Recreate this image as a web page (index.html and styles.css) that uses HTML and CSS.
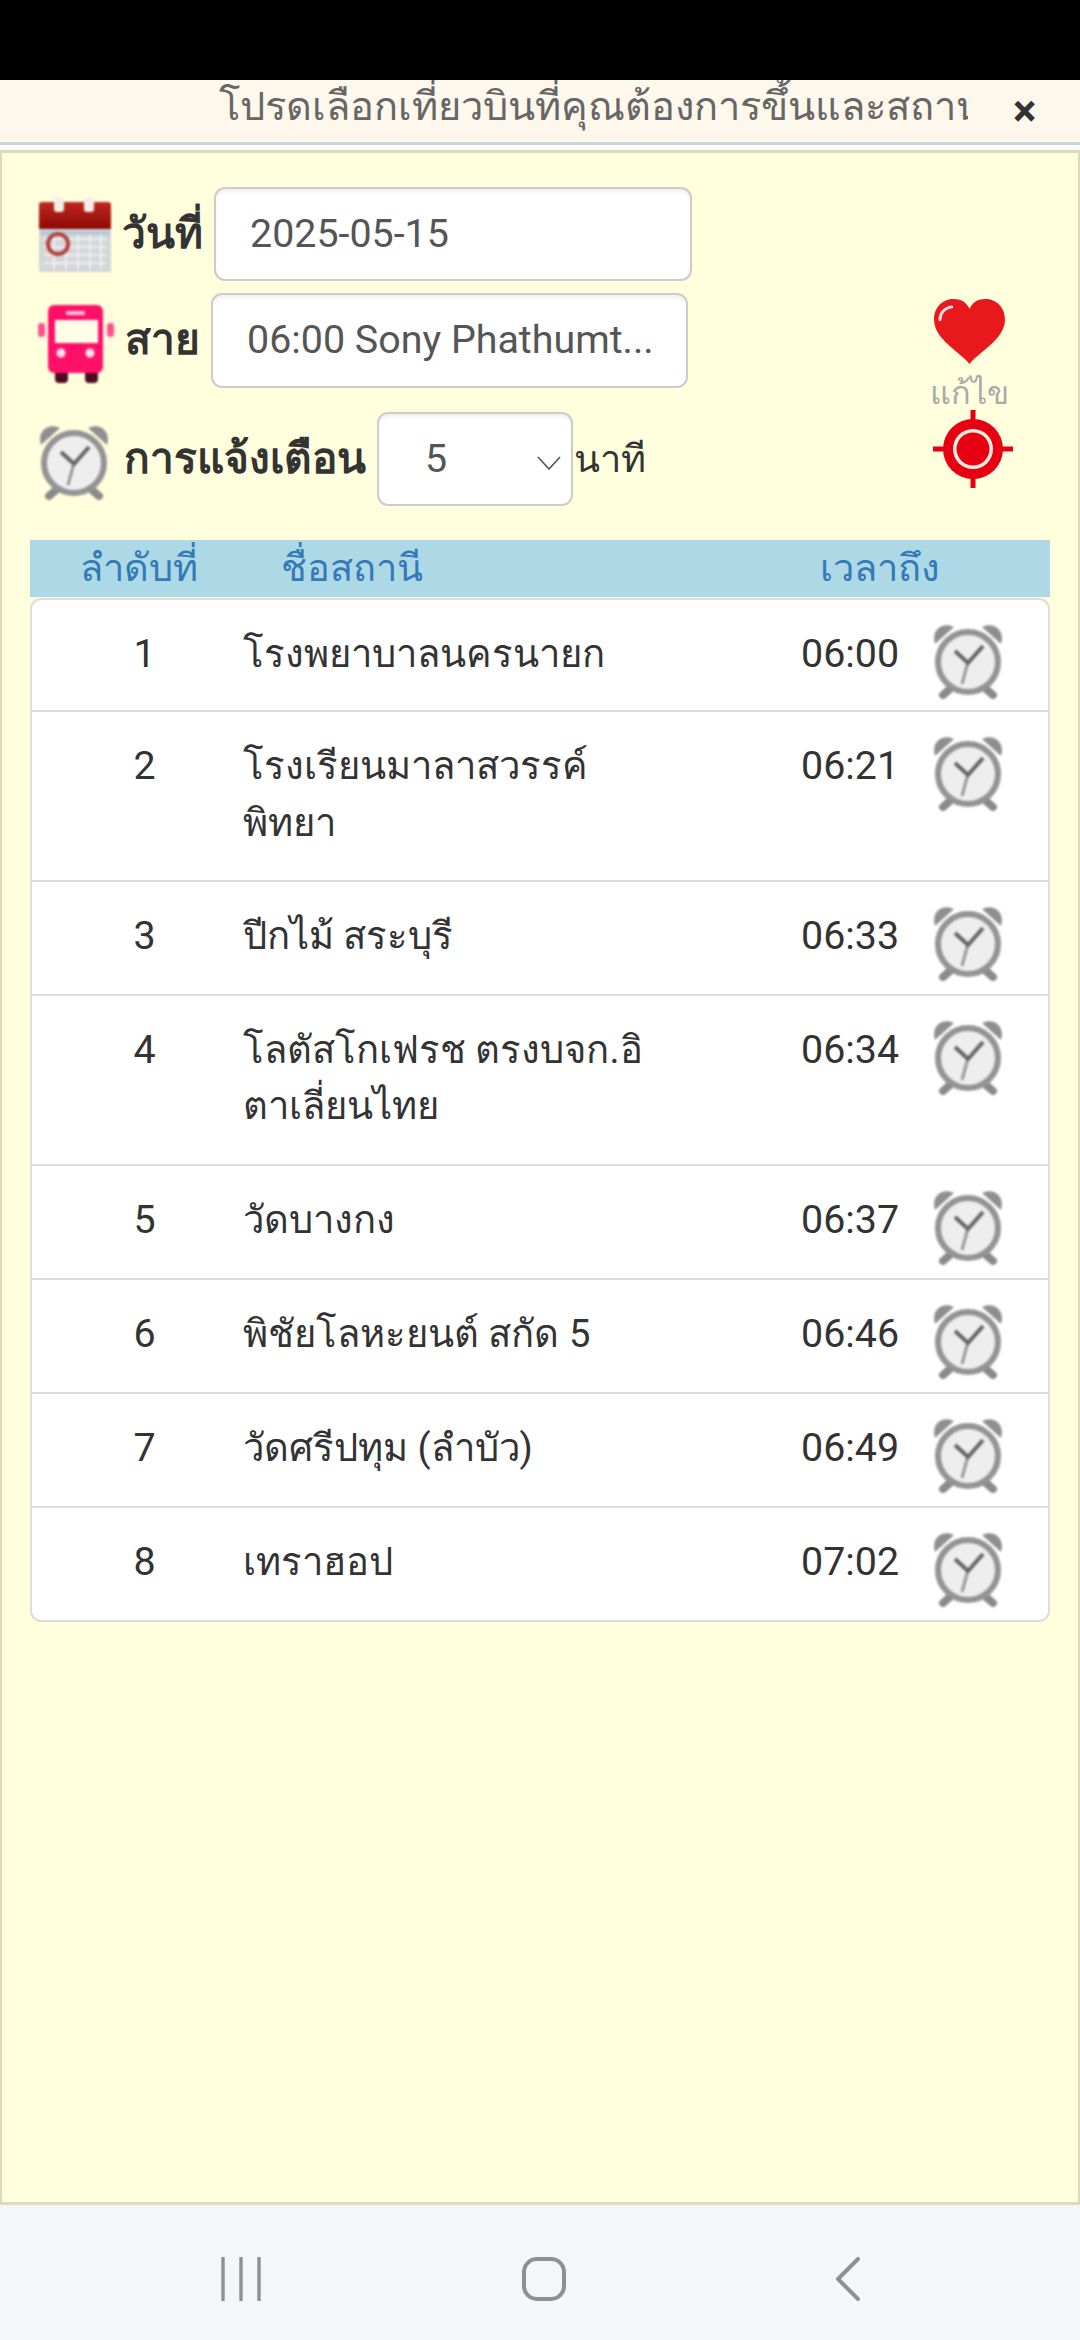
FILE: index.html
```html
<!DOCTYPE html>
<html lang="th">
<head>
<meta charset="utf-8">
<title>เลือกสถานี</title>
<link rel="stylesheet" href="styles.css">
</head>
<body>
<svg class="defs" width="0" height="0" aria-hidden="true">
  <defs>
    <linearGradient id="calred" x1="0" y1="0" x2="0" y2="1"><stop offset="0" stop-color="#c0281f"/><stop offset="1" stop-color="#8c0a06"/></linearGradient>
    <symbol id="clock" viewBox="0 0 72 76">
      <path d="M2 21C-2 8 8-2 21 4zM68 21C72 8 62-2 49 4z" fill="#8f8f8f"/>
      <path d="M17 66 10 72M53 66l7 6" stroke="#8a8a8a" stroke-width="8" stroke-linecap="round"/>
      <circle cx="35" cy="39" r="30" fill="#eeeeee" stroke="#949494" stroke-width="6"/>
      <path d="M35 39 29 61" fill="none" stroke="#999" stroke-width="3"/>
      <path d="M22 28 35 40 50 23" fill="none" stroke="#666" stroke-width="4"/>
    </symbol>
  </defs>
</svg>
<div class="blackbar"></div>
<div class="notice">
  <div class="marquee"><span>โปรดเลือกเที่ยวบินที่คุณต้องการขึ้นและสถานที่</span></div>
  <div class="close">×</div>
</div>
<main class="panel">
  <section class="top">
    <div class="form">
      <div class="frow frow-date">
        <svg class="icon cal" viewBox="0 0 74 76">
          <rect x="1" y="32" width="72" height="43" fill="#d4d6d8"/>
          <path d="M6 42h62M6 50h62M6 58h62M6 66h62M16 34v38M28 34v38M40 34v38M52 34v38M63 34v38" stroke="#eceef0" stroke-width="2"/>
          <path d="M2 36h70" stroke="#a9c6dc" stroke-width="3"/>
          <path d="M4 5h66a3 3 0 0 1 3 3v24H1V8a3 3 0 0 1 3-3z" fill="url(#calred)"/>
          <rect x="16" y="0" width="10" height="15" rx="3" fill="#f4f0e8"/>
          <rect x="46" y="0" width="10" height="15" rx="3" fill="#f4f0e8"/>
          <circle cx="20" cy="47" r="10" fill="none" stroke="#b5403c" stroke-width="4"/>
        </svg>
        <span class="flabel">วันที่</span>
        <div class="field field-date">2025-05-15</div>
      </div>
      <div class="frow frow-line">
        <svg class="icon bus" viewBox="0 0 77 78">
          <path d="M17 62h13v12a4 4 0 0 1-4 4h-5a4 4 0 0 1-4-4zM47 62h13v12a4 4 0 0 1-4 4h-5a4 4 0 0 1-4-4z" fill="#4e0a22"/>
          <rect x="10" y="0" width="55" height="68" rx="6" fill="#ff0f68"/>
          <rect x="17" y="15" width="43" height="23" fill="#ffffe8"/>
          <rect x="28" y="6" width="19" height="4" rx="1.5" fill="#ffc0d4"/>
          <circle cx="23" cy="48" r="4.5" fill="#ffe0ea"/>
          <circle cx="52" cy="48" r="4.5" fill="#ffe0ea"/>
          <rect x="0" y="18" width="7" height="14" rx="3" fill="#ff4f90"/>
          <rect x="69" y="18" width="7" height="14" rx="3" fill="#ff4f90"/>
        </svg>
        <span class="flabel">สาย</span>
        <div class="field field-line">06:00 Sony Phathumt...</div>
      </div>
      <div class="frow frow-alert">
        <svg class="icon alarm"><use href="#clock"/></svg>
        <span class="flabel">การแจ้งเตือน</span>
        <div class="field field-select">
          <span>5</span>
          <svg class="chev" viewBox="0 0 24 14"><path d="M1 1l11 12L23 1" fill="none" stroke="#555" stroke-width="1.6"/></svg>
        </div>
        <span class="unit">นาที</span>
      </div>
    </div>
    <div class="actions">
      <svg class="heart" viewBox="0 0 74 68">
        <path d="M37 67C28 55 1 42 1 22 1 9 10 1 21 1c7 0 13 3 16 10 3-7 9-10 16-10 11 0 20 8 20 21 0 20-27 33-36 45z" fill="#e8191c"/>
        <path d="M7 22c0-7 5-12 12-13" fill="none" stroke="#ffd8d8" stroke-width="3" stroke-linecap="round"/>
      </svg>
      <span class="edit">แก้ไข</span>
      <svg class="target" viewBox="0 0 80 78">
        <path d="M40 0v78M0 39h80" stroke="#e60012" stroke-width="5"/>
        <circle cx="40" cy="39" r="30" fill="#e60012"/>
        <circle cx="40" cy="39" r="20" fill="#ffeede"/>
        <circle cx="40" cy="39" r="16.5" fill="#e60012"/>
      </svg>
    </div>
  </section>

  <div class="thead">
    <span class="th-num">ลำดับที่</span>
    <span class="th-name">ชื่อสถานี</span>
    <span class="th-time">เวลาถึง</span>
  </div>
  <ul class="list">
    <li class="row"><span class="num">1</span><span class="name">โรงพยาบาลนครนายก</span><span class="time">06:00</span><svg class="ralarm"><use href="#clock"/></svg></li>
    <li class="row"><span class="num">2</span><span class="name">โรงเรียนมาลาสวรรค์<br>พิทยา</span><span class="time">06:21</span><svg class="ralarm"><use href="#clock"/></svg></li>
    <li class="row"><span class="num">3</span><span class="name">ปีกไม้ สระบุรี</span><span class="time">06:33</span><svg class="ralarm"><use href="#clock"/></svg></li>
    <li class="row"><span class="num">4</span><span class="name">โลตัสโกเฟรช ตรงบจก.อิ<br>ตาเลี่ยนไทย</span><span class="time">06:34</span><svg class="ralarm"><use href="#clock"/></svg></li>
    <li class="row"><span class="num">5</span><span class="name">วัดบางกง</span><span class="time">06:37</span><svg class="ralarm"><use href="#clock"/></svg></li>
    <li class="row"><span class="num">6</span><span class="name">พิชัยโลหะยนต์ สกัด 5</span><span class="time">06:46</span><svg class="ralarm"><use href="#clock"/></svg></li>
    <li class="row"><span class="num">7</span><span class="name">วัดศรีปทุม (ลำบัว)</span><span class="time">06:49</span><svg class="ralarm"><use href="#clock"/></svg></li>
    <li class="row"><span class="num">8</span><span class="name">เทราฮอป</span><span class="time">07:02</span><svg class="ralarm"><use href="#clock"/></svg></li>
  </ul>
</main>
<nav class="navbar">
  <svg class="nav-recents" viewBox="0 0 42 44"><path d="M3 1v42M21 1v42M39 1v42" stroke="#8f9094" stroke-width="3.4" stroke-linecap="round"/></svg>
  <svg class="nav-home" viewBox="0 0 44 44"><rect x="2" y="2" width="40" height="40" rx="13" fill="none" stroke="#8f9094" stroke-width="4"/></svg>
  <svg class="nav-back" viewBox="0 0 25 44"><path d="M23 2 3 22l20 20" fill="none" stroke="#8f9094" stroke-width="4" stroke-linecap="round" stroke-linejoin="round"/></svg>
</nav>
</body>
</html>
```

FILE: styles.css
```css
* { box-sizing: border-box; }
html, body { margin: 0; padding: 0; }
body {
  width: 1080px;
  height: 2340px;
  overflow: hidden;
  display: flex;
  flex-direction: column;
  background: #fff;
  color: #333;
  font-family: Roboto, "Noto Sans", "DejaVu Sans", sans-serif;
  font-size: 39.4px;
  line-height: 56.25px;
}
.defs { position: absolute; }
.blackbar { height: 80px; background: #000; flex: none; }
.notice {
  height: 65px;
  flex: none;
  display: flex;
  align-items: center;
  background: #fef8ec;
  border-bottom: 3px solid #c6d9d2;
  padding-left: 219px;
  overflow: hidden;
}
.marquee {
  width: 749px;
  flex: none;
  overflow: hidden;
  white-space: nowrap;
  color: #666;
  font-size: 39.8px;
  line-height: 60px;
  margin-top: -8px;
}
.close {
  margin-left: 45px;
  font-size: 44px;
  font-weight: 700;
  line-height: 60px;
  color: #333;
}
.panel {
  margin-top: 5px;
  height: 2055px;
  flex: none;
  background: #ffffdd;
  border: 3px solid #dadcbc;
  border-right-width: 2px;
  border-left-width: 2px;
  padding: 34px 28px 0;
}
.top { display: flex; justify-content: space-between; }
.form { display: flex; flex-direction: column; }
.frow { display: flex; align-items: center; }
.frow-date { height: 94px; }
.frow-line { height: 95px; margin-top: 12px; }
.frow-alert { height: 94px; margin-top: 24px; }
.icon { flex: none; display: block; filter: blur(.8px); }
.cal { width: 74px; height: 76px; margin-left: 8px; margin-top: 2px; }
.bus { width: 77px; height: 78px; margin-left: 8px; margin-top: 7px; }
.alarm { width: 72px; height: 76px; margin-left: 9px; margin-right: 3px; margin-top: 5px; }
.flabel { font-weight: 700; font-size: 42.4px; color: #333; margin-left: 10px; white-space: nowrap; }
.field {
  flex: none;
  height: 100%;
  display: flex;
  align-items: center;
  background: #fff;
  border: 2.6px solid #ccc;
  border-radius: 11px;
  box-shadow: inset 0 3px 3px rgba(0,0,0,.06);
  color: #555;
  white-space: nowrap;
}
.field-date { width: 478px; margin-left: 11px; padding-left: 34px; }
.field-line { width: 477px; margin-left: 11px; padding-left: 34px; }
.field-select { width: 196px; margin-left: 11px; padding-left: 46px; justify-content: space-between; padding-right: 10px; }
.chev { width: 24px; height: 14px; display: block; margin-top: 8px; }
.unit { color: #333; margin-left: 1px; font-size: 38px; }
.actions {
  width: 80px;
  margin-right: 37px;
  margin-top: 111px;
  display: flex;
  flex-direction: column;
  align-items: center;
}
.heart { width: 73px; height: 67px; display: block; flex: none; margin-left: -7px; }
.edit { font-size: 32.5px; line-height: 44px; margin-top: 6px; margin-left: -7px; color: #aaa; height: 39px; white-space: nowrap; }
.target { width: 80px; height: 78px; display: block; flex: none; filter: blur(.3px); }
.thead {
  margin-top: 34px;
  height: 57px;
  background: #add8e6;
  color: #337ab7;
  font-size: 38px;
  display: flex;
  align-items: center;
  white-space: nowrap;
}
.th-num { width: 251px; padding-left: 50px; }
.th-name { width: 539px; }
.th-time { flex: none; }
.list {
  list-style: none;
  margin: 1px 0 0;
  padding: 0;
  background: #fff;
  border: 2px solid #ddd;
  border-radius: 11px;
  overflow: hidden;
}
.row {
  display: grid;
  grid-template-columns: 211px 558px 132px 72px;
  align-items: start;
  padding: 26px 0 29.6px;
  border-top: 2px solid #ddd;
  color: #333;
}
.row:first-child { border-top: 0; padding-bottom: 28px; }
.num { text-align: center; padding-left: 14px; }
.name { white-space: nowrap; font-size: 38.2px; }
.ralarm { width: 72px; height: 76px; display: block; margin-top: -3px; margin-bottom: -20px; filter: blur(.8px); }
.navbar {
  flex: 1;
  background: #f5f6f8;
  display: flex;
  align-items: center;
  padding: 12px 0 0 220px;
}
.nav-recents { width: 42px; height: 44px; display: block; }
.nav-home { width: 44px; height: 44px; display: block; margin-left: 260px; }
.nav-back { width: 25px; height: 44px; display: block; margin-left: 269px; }
```
